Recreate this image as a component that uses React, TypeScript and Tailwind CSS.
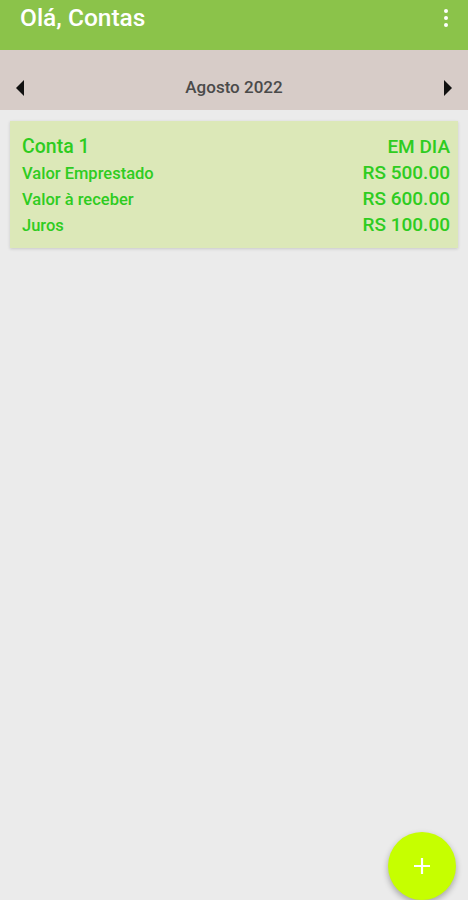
import { useState } from 'react';

interface Conta {
  nome: string;
  status: string;
  emprestado: string;
  receber: string;
  juros: string;
}

const contas: Conta[] = [
  {
    nome: 'Conta 1',
    status: 'EM DIA',
    emprestado: 'RS 500.00',
    receber: 'RS 600.00',
    juros: 'RS 100.00',
  },
];

function Row({ label, value }: { label: string; value: string }) {
  return (
    <div className="flex items-baseline justify-between h-[26px] leading-[26px]">
      <span className="text-[16.5px] font-medium">{label}</span>
      <span className="text-[19px] font-medium">{value}</span>
    </div>
  );
}

export default function App() {
  const [mes] = useState('Agosto 2022');

  return (
    <div
      className="relative h-[900px] w-[468px] overflow-hidden bg-[#ebebeb]"
      style={{ fontFamily: 'Roboto, "Liberation Sans", sans-serif' }}
    >
      {/* barra superior */}
      <header className="flex h-[50px] items-start justify-between bg-[#8bc34a] pl-5 pr-4 pt-[3px]">
        <h1 className="text-[24.5px] leading-[30px] font-medium text-white">Olá, Contas</h1>
        <button className="flex flex-col items-center gap-[3px] px-1 pt-[6px]">
          <span className="h-[4px] w-[4px] rounded-full bg-white" />
          <span className="h-[4px] w-[4px] rounded-full bg-white" />
          <span className="h-[4px] w-[4px] rounded-full bg-white" />
        </button>
      </header>

      {/* seletor de mês */}
      <div className="flex h-[60px] items-center justify-between bg-[#d7ccc8] px-[14px] pt-[15px]">
        <svg width="12" height="18" viewBox="0 0 12 18">
          <path d="M10 1 L2 9 L10 17 Z" fill="#111" />
        </svg>
        <span className="text-[17px] font-medium text-[#4a4a4a]">{mes}</span>
        <svg width="12" height="18" viewBox="0 0 12 18">
          <path d="M2 1 L10 9 L2 17 Z" fill="#111" />
        </svg>
      </div>

      {/* lista */}
      <div className="flex flex-col gap-3 px-[10px] pt-[11px]">
        {contas.map((c) => (
          <div
            key={c.nome}
            className="bg-[#dce8b8] pl-3 pr-[8px] pt-[12px] pb-[10px] text-[#2ecc1f] shadow-[0_1px_3px_rgba(0,0,0,0.15)]"
          >
            <div className="flex items-baseline justify-between h-[27px] leading-[27px]">
              <span className="text-[19.5px] font-medium">{c.nome}</span>
              <span className="text-[19px] font-medium">{c.status}</span>
            </div>
            <Row label="Valor Emprestado" value={c.emprestado} />
            <Row label="Valor à receber" value={c.receber} />
            <Row label="Juros" value={c.juros} />
          </div>
        ))}
      </div>

      {/* botão flutuante */}
      <button className="absolute left-[388px] top-[832px] flex h-[68px] w-[68px] items-center justify-center rounded-full bg-[#c6ff00] shadow-[0_3px_6px_rgba(0,0,0,0.3)]">
        <svg width="20" height="20" viewBox="0 0 20 20">
          <path d="M10 2 V18 M2 10 H18" stroke="white" strokeWidth="2.2" />
        </svg>
      </button>
    </div>
  );
}
